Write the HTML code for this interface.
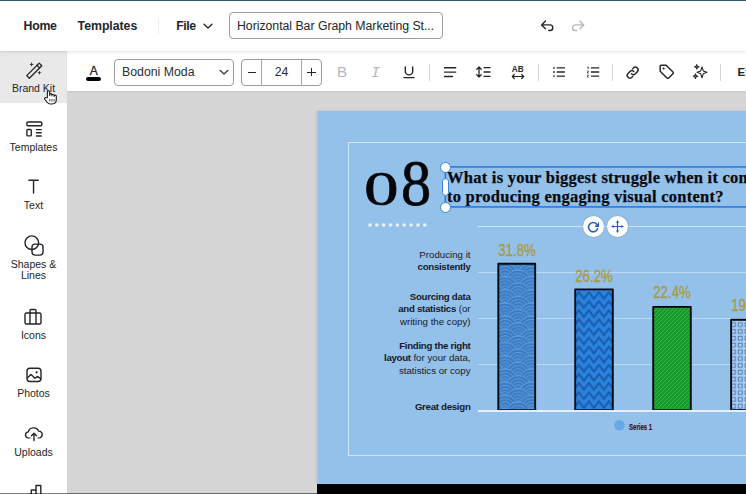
<!DOCTYPE html>
<html lang="en">
<head>
<meta charset="utf-8">
<title>Horizontal Bar Graph Marketing Statistics</title>
<style>
*{box-sizing:border-box;margin:0;padding:0}
html,body{width:746px;height:494px;overflow:hidden;background:#d6d6d6;font-family:"Liberation Sans",sans-serif;color:#1f2328}
.abs{position:absolute}
#app{position:relative;width:746px;height:494px;overflow:hidden;background:#d6d6d6}
#topline{left:0;top:0;width:746px;height:1.250px;background:#2d5d68;z-index:6}
#topbar{left:0;top:1px;width:746px;height:50px;background:#fff;box-shadow:0 1px 3px rgba(0,0,0,.12);z-index:5}
.nav{position:absolute;top:18px;font-weight:700;font-size:12.300px;line-height:15px;color:#22262b;white-space:nowrap}
#title{left:229px;top:11.100px;width:214px;height:27px;border:1px solid #9a9da1;border-radius:4px;font-size:12.300px;line-height:26px;padding-left:7px;letter-spacing:-.03px;color:#22262b;white-space:nowrap;overflow:hidden}
#sidebar{left:0;top:51px;width:67px;height:443px;background:#fff;z-index:3}
#brand{left:0;top:0;width:67px;height:52px;background:#e9e9e9}
.sb{position:absolute;left:0;width:67px;text-align:center;font-size:10.500px;line-height:12px;color:#22262b;white-space:nowrap}
.sb svg{display:block;margin:0 auto}
#toolbar{left:67px;top:51px;width:679px;height:39.600px;background:#fff;z-index:4;box-shadow:0 1px 2px rgba(0,0,0,.08)}
.box{position:absolute;border:1px solid #9a9da1;border-radius:4px;background:#fff}
.sep{position:absolute;top:12.500px;width:1px;height:17px;background:#d4d6d9}
.ico{position:absolute}
#slide{left:317px;top:111px;width:429px;height:373px;background:#94c1ea;box-shadow:-1px 0 3px rgba(0,0,0,.09)}
#black{left:317px;top:484px;width:429px;height:10px;background:#000}
#inner{left:31.400px;top:31.300px;width:420px;height:313.600px;border:1.800px solid rgba(214,233,250,.9)}
.lbl{position:absolute;right:275.500px;text-align:right;font-size:9.700px;line-height:12.100px;color:#16192b;white-space:nowrap}
.lbl b{font-weight:700;letter-spacing:-.3px}
.grid{position:absolute;left:161px;width:270px;height:1px;background:rgba(225,238,250,.55)}
.bar{position:absolute;border:2px solid #05070c}
.val{-webkit-text-stroke:.3px #a89b3e;position:absolute;font-size:16px;line-height:16px;color:#a89b3e;white-space:nowrap;transform:scaleX(.83);transform-origin:50% 50%;text-align:center;width:60px}
</style>
</head>
<body>
<div id="app">
  <div id="topline" class="abs"></div>
  <div id="topbar" class="abs">
    <div class="nav" style="left:23.500px;letter-spacing:-.25px">Home</div>
    <div class="nav" style="left:77.600px;letter-spacing:-.03px">Templates</div>
    <div class="abs" style="left:157.500px;top:18px;width:1px;height:15px;background:#ebecee"></div>
    <div class="nav" style="left:176.200px;letter-spacing:-.4px">File</div>
    <svg class="abs" style="left:202.400px;top:20px" width="12" height="10" viewBox="0 0 12 10"><path d="M2 3.200 L6 7 L10 3.200" fill="none" stroke="#22262b" stroke-width="1.300" stroke-linecap="round" stroke-linejoin="round"/></svg>
    <div id="title" class="abs">Horizontal Bar Graph Marketing St...</div>
    <svg class="abs" style="left:540px;top:18px" width="16" height="14" viewBox="0 0 16 14"><path d="M5.500 2 L1.600 5.900 L5.500 9.700 M1.600 5.900 H10 a2.800 2.800 0 0 1 0 5.600 H8.800" fill="none" stroke="#22262b" stroke-width="1.400" stroke-linecap="round" stroke-linejoin="round"/></svg>
    <svg class="abs" style="left:571px;top:18px" width="16" height="14" viewBox="0 0 16 14"><path d="M8.900 2 L12.800 5.900 L8.900 9.700 M12.800 5.900 H4.400 a2.800 2.800 0 0 0 0 5.600 H5.600" fill="none" stroke="#b6b9bd" stroke-width="1.400" stroke-linecap="round" stroke-linejoin="round"/></svg>
  </div>

  <div id="sidebar" class="abs">
    <div id="brand" class="abs"></div>
    <svg class="abs" style="left:24.500px;top:10.500px" width="19" height="18" viewBox="0 0 19 18"><g fill="none" stroke="#22262b" stroke-width="1.300" stroke-linejoin="round" stroke-linecap="round"><path d="M1.700 13.600 L14.200 1.100 L16.800 3.700 L4.300 16.200 Z"/><path d="M12 3.300 L14.600 5.900"/></g><g fill="#22262b"><path d="M6.600 .1 l.55 1.750 1.750.55 -1.750.55 -.55 1.750 -.55-1.750 -1.750-.55 1.750-.55z"/><path d="M14.400 8.500 l.55 1.750 1.750.55 -1.750.55 -.55 1.750 -.55-1.750 -1.750-.55 1.750-.55z"/></g></svg>
    <div class="sb" style="top:31.100px">Brand Kit</div>

    <svg class="abs" style="left:25px;top:69px" width="18" height="18" viewBox="0 0 18 18"><g fill="none" stroke="#22262b" stroke-width="1.400" stroke-linecap="round" stroke-linejoin="round"><rect x="1.900" y="2" width="14.900" height="3.800" rx="1"/><rect x="1.900" y="9.500" width="4.400" height="6.400" rx="1"/><path d="M11.400 9.600 H16.200 M11.400 12.800 H16.200 M11.400 16 H16.200"/></g></svg>
    <div class="sb" style="top:90.100px">Templates</div>

    <svg class="abs" style="left:25px;top:127px" width="18" height="18" viewBox="0 0 18 18"><path d="M3.900 2.300 H13.200 M8.550 2.300 V15" fill="none" stroke="#22262b" stroke-width="1.400" stroke-linecap="round"/></svg>
    <div class="sb" style="top:148.400px">Text</div>

    <svg class="abs" style="left:22.500px;top:183px" width="22" height="22" viewBox="0 0 22 22"><g fill="none" stroke="#22262b" stroke-width="1.400"><circle cx="8.800" cy="8.700" r="6.800"/><rect x="9" y="10.100" width="11" height="11" rx="3"/></g></svg>
    <div class="sb" style="top:207.800px;line-height:11.500px">Shapes &amp;<br>Lines</div>

    <svg class="abs" style="left:23.300px;top:255.500px" width="20" height="20" viewBox="0 0 20 20"><g fill="none" stroke="#22262b" stroke-width="1.400" stroke-linejoin="round"><rect x="2" y="6" width="16" height="11" rx="1.500"/><path d="M7 6 V3.500 a1 1 0 0 1 1-1 h4 a1 1 0 0 1 1 1 V6 M7 6 V17 M13 6 V17"/></g></svg>
    <div class="sb" style="top:278.100px">Icons</div>

    <svg class="abs" style="left:24.500px;top:314.700px" width="18" height="18" viewBox="0 0 18 18"><g fill="none" stroke="#22262b" stroke-width="1.400" stroke-linejoin="round" stroke-linecap="round"><rect x="2" y="2.300" width="14" height="13.200" rx="3"/><path d="M2.500 11.800 L6 8.500 L10 12.300 L12.500 10.400 L15.800 12.800"/></g><circle cx="11.600" cy="6.300" r="1.100" fill="#22262b"/></svg>
    <div class="sb" style="top:336.300px">Photos</div>

    <svg class="abs" style="left:23.700px;top:373.300px" width="20" height="18" viewBox="0 0 20 18"><g fill="none" stroke="#22262b" stroke-width="1.400" stroke-linejoin="round" stroke-linecap="round"><path transform="translate(0 1.820) scale(1 .87)" d="M6 14 H5 a3.500 3.500 0 0 1 -.6 -6.950 A5.200 5.200 0 0 1 14.600 6.100 A4 4 0 0 1 15 14 H14"/><path d="M10 16.500 V9.500 M7.500 11.700 L10 9.200 L12.500 11.700"/></g></svg>
    <div class="sb" style="top:395.100px">Uploads</div>

    <svg class="abs" style="left:23.500px;top:432.500px" width="20" height="14" viewBox="0 0 20 14"><path d="M2.800 14 V10.500 H7.300 V6 H12 V1.500 H16.800 V14" fill="none" stroke="#22262b" stroke-width="1.400" stroke-linejoin="round"/><path d="M7.300 10.500 V14 M12 6 V14" stroke="#22262b" stroke-width="1.400"/></svg>
  </div>

  <div id="toolbar" class="abs">
    <!-- text colour -->
    <div class="abs" style="left:18.700px;top:13.200px;width:16px;text-align:center;font-size:12px;line-height:14px;color:#22262b;-webkit-text-stroke:.3px #22262b">A</div>
    <div class="abs" style="left:19.400px;top:26.200px;width:15px;height:3.500px;border-radius:2px;background:#000"></div>
    <!-- font select -->
    <div class="box" style="left:47px;top:8px;width:120px;height:27px;font-size:12.300px;line-height:25px;padding-left:7px;color:#2a2e33">Bodoni Moda</div>
    <svg class="abs" style="left:151.300px;top:16.400px" width="12" height="10" viewBox="0 0 12 10"><path d="M2 3.200 L6 7 L10 3.200" fill="none" stroke="#33373c" stroke-width="1.200" stroke-linecap="round" stroke-linejoin="round"/></svg>
    <!-- size -->
    <div class="box" style="left:174px;top:8px;width:81px;height:27px"></div>
    <div class="abs" style="left:194px;top:8px;width:1px;height:27px;background:#a3a6aa"></div>
    <div class="abs" style="left:234px;top:8px;width:1px;height:27px;background:#a3a6aa"></div>
    <div class="abs" style="left:181.400px;top:20.600px;width:7.600px;height:1.300px;background:#22262b"></div>
    <div class="abs" style="left:195px;top:8px;width:39px;text-align:center;font-size:12.300px;line-height:27px;color:#2a2e33">24</div>
    <div class="abs" style="left:240.300px;top:20.600px;width:8.400px;height:1.300px;background:#22262b"></div>
    <div class="abs" style="left:243.850px;top:17.100px;width:1.300px;height:8.400px;background:#22262b"></div>
    <!-- B I U -->
    <div class="abs" style="left:269px;top:12px;font-size:15px;line-height:18px;color:#b4b8bd;width:12px;text-align:center">B</div>
    <div class="abs" style="left:301.500px;top:14.300px;font-family:'Liberation Mono',monospace;font-size:15px;line-height:18px;color:#b4b8bd;width:14px;text-align:center;font-style:italic">I</div>
    <svg class="ico" style="left:336.200px;top:15px" width="12" height="13" viewBox="0 0 12 13"><path d="M2.300 1 V5.200 a3.700 3.700 0 0 0 7.400 0 V1 M1 11.600 H11" fill="none" stroke="#22262b" stroke-width="1.400" stroke-linecap="round"/></svg>
    <div class="sep" style="left:362px"></div>
    <!-- align -->
    <svg class="ico" style="left:376px;top:15px" width="14" height="12" viewBox="0 0 14 12"><path d="M1.500 1.700 H12.700 M1.500 6.100 H12.700 M1.500 10.500 H9.500" fill="none" stroke="#22262b" stroke-width="1.400" stroke-linecap="round"/></svg>
    <!-- line height -->
    <svg class="ico" style="left:408px;top:14px" width="16" height="14" viewBox="0 0 16 14"><path d="M4 2 V12 M1.800 4.200 L4 2 L6.200 4.200 M1.800 9.800 L4 12 L6.200 9.800 M9 2.700 H15 M9 7 H15 M9 11.300 H15" fill="none" stroke="#22262b" stroke-width="1.300" stroke-linecap="round" stroke-linejoin="round"/></svg>
    <!-- letter spacing -->
    <div class="abs" style="left:441.750px;top:14px;width:18px;text-align:center;font-size:8.200px;font-weight:700;line-height:9px;color:#22262b;letter-spacing:.2px">AB</div>
    <svg class="ico" style="left:443.750px;top:21.500px" width="14" height="7" viewBox="0 0 14 7"><path d="M1.300 3.500 H12.700 M3.300 1.500 L1.300 3.500 L3.300 5.500 M10.700 1.500 L12.700 3.500 L10.700 5.500" fill="none" stroke="#22262b" stroke-width="1.200" stroke-linecap="round" stroke-linejoin="round"/></svg>
    <div class="sep" style="left:470.500px"></div>
    <!-- bullets -->
    <svg class="ico" style="left:485px;top:15px" width="14" height="12" viewBox="0 0 14 12"><path d="M5.200 1.900 H12.500 M5.200 6 H12.500 M5.200 10.100 H12.500" fill="none" stroke="#22262b" stroke-width="1.300" stroke-linecap="round"/><g fill="#22262b"><circle cx="2" cy="1.900" r=".9"/><circle cx="2" cy="6" r=".9"/><circle cx="2" cy="10.100" r=".9"/></g></svg>
    <!-- numbered -->
    <svg class="ico" style="left:518.500px;top:15px" width="14" height="12" viewBox="0 0 14 12"><path d="M5.400 1.900 H12.700 M5.400 6 H12.700 M5.400 10.100 H12.700" fill="none" stroke="#22262b" stroke-width="1.300" stroke-linecap="round"/><path d="M1.300 1.400 L2.200 .9 V3 M1.200 5 H2.500 L1.200 7 H2.600 M1.200 9.100 H2.500 L1.200 11.100 H2.600" fill="none" stroke="#22262b" stroke-width=".8"/></svg>
    <div class="sep" style="left:545px"></div>
    <!-- link -->
    <svg class="ico" style="left:558.200px;top:13.600px" width="15.300" height="15.300" viewBox="0 0 18 18"><g fill="none" stroke="#22262b" stroke-width="1.700" stroke-linecap="round" stroke-linejoin="round"><path d="M7.600 10.400 a3.200 3.200 0 0 0 4.500 0 l2.600-2.600 a3.200 3.200 0 0 0 -4.500-4.500 l-1.200 1.200"/><path d="M10.400 7.600 a3.200 3.200 0 0 0 -4.500 0 l-2.600 2.600 a3.200 3.200 0 0 0 4.500 4.500 l1.200-1.200"/></g></svg>
    <!-- tag -->
    <svg class="ico" style="left:590.600px;top:12.400px" width="17.400" height="17.400" viewBox="0 0 20 20"><path d="M2.500 3.500 a1 1 0 0 1 1-1 H9.400 L17.200 10.300 a1.400 1.400 0 0 1 0 2 L12.300 17.200 a1.400 1.400 0 0 1 -2 0 L2.500 9.400 Z" fill="none" stroke="#22262b" stroke-width="1.700" stroke-linejoin="round"/><circle cx="6.400" cy="6.400" r="1.200" fill="#22262b"/></svg>
    <!-- sparkle -->
    <svg class="ico" style="left:625px;top:12px" width="16" height="18" viewBox="0 0 16 18"><g fill="none" stroke="#22262b" stroke-width="1.100" stroke-linejoin="round"><path d="M10 3.800 l1.300 4.100 3.700 1.400 -3.700 1.400 -1.300 4.100 -1.300-4.100 -3.700-1.400 3.700-1.400z"/><path d="M4.800 1.600 l.6 1.600 1.700.6 -1.700.6 -.6 1.600 -.6-1.600 -1.700-.6 1.700-.6z"/><path d="M3.500 10.900 l.6 1.700 1.700.6 -1.700.6 -.6 1.700 -.6-1.700 -1.700-.6 1.700-.6z"/></g></svg>
    <div class="sep" style="left:652.700px"></div>
    <div class="abs" style="left:670.500px;top:13.200px;font-size:11.500px;font-weight:700;line-height:16px;color:#22262b;white-space:nowrap">Effects</div>
  </div>

  <div id="slide" class="abs">
    <div class="abs" style="left:0;top:0;width:1px;height:373px;background:rgba(211,211,211,.45)"></div>
    <div id="inner" class="abs"></div>
    <!-- big number -->
    <div class="abs" id="num0" style="-webkit-text-stroke:.8px #05060a;left:46.800px;top:33px;font-family:'Liberation Serif',serif;font-size:68px;line-height:70px;color:#05060a;transform:scale(1.02,.71);transform-origin:0 100%">0</div><div class="abs" id="num8" style="-webkit-text-stroke:.8px #05060a;left:83.700px;top:38.400px;font-family:'Liberation Serif',serif;font-size:68px;line-height:70px;color:#05060a;transform:scale(.885,.965);transform-origin:0 0">8</div>
    <!-- dots -->
    <svg class="abs" style="left:50px;top:111.400px" width="62" height="6" viewBox="0 0 62 6"><g fill="#eaf3fb"><circle cx="3.00" cy="3" r="1.800"/><circle cx="9.85" cy="3" r="1.800"/><circle cx="16.70" cy="3" r="1.800"/><circle cx="23.55" cy="3" r="1.800"/><circle cx="30.40" cy="3" r="1.800"/><circle cx="37.25" cy="3" r="1.800"/><circle cx="44.10" cy="3" r="1.800"/><circle cx="50.95" cy="3" r="1.800"/><circle cx="57.80" cy="3" r="1.800"/></g></svg>
    <!-- headline -->
    <div class="abs" id="head" style="left:130px;top:58px;font-family:'Liberation Serif',serif;font-weight:700;font-size:16.500px;line-height:18.900px;color:#0a0b10;white-space:nowrap;letter-spacing:.25px;-webkit-text-stroke:.25px #0a0b10">What is your biggest struggle when it comes<br>to producing engaging visual content?</div>
    <!-- selection -->
    <svg class="abs" style="left:120px;top:50px" width="309" height="52" viewBox="0 0 309 52"><rect x="8.400" y="5.900" width="320" height="40" fill="none" stroke="#2f7de1" stroke-width="1.700"/></svg>
    <!-- header line -->
    <div class="abs" style="left:161px;top:115px;width:270px;height:1px;background:rgba(225,238,250,.75)"></div>

    <!-- grid -->
    <div class="grid" style="top:161px"></div>
    <div class="grid" style="top:207px"></div>
    <div class="grid" style="top:253px"></div>
    
    <!-- labels -->
    <div class="lbl" style="top:137.800px">Producing it<br><b>consistently</b></div>
    <div class="lbl" style="top:180.400px"><b>Sourcing data</b><br><b>and statistics</b> (or<br>writing the copy)</div>
    <div class="lbl" style="top:229.400px"><b>Finding the right</b><br><b>layout</b> for your data,<br>statistics or copy</div>
    <div class="lbl" style="top:290.200px"><b>Great design</b></div>

    <!-- bars -->
    <svg class="abs" style="left:0;top:0" width="429" height="373" viewBox="0 0 429 373">
      <defs>
        <pattern id="p1" width="26.4" height="13.2" patternUnits="userSpaceOnUse" x="188" y="165.600">
          <rect width="26.4" height="13.2" fill="#3a7ac2"/>
          <circle cx="0.00" cy="-13.20" r="13.20" fill="#3a7ac2" stroke="#66a6e2" stroke-width=".85"/><circle cx="0.00" cy="-13.20" r="10.0" fill="none" stroke="#66a6e2" stroke-width=".85"/><circle cx="0.00" cy="-13.20" r="6.9" fill="none" stroke="#66a6e2" stroke-width=".85"/><circle cx="0.00" cy="-13.20" r="3.8" fill="none" stroke="#66a6e2" stroke-width=".85"/><circle cx="0.00" cy="-13.20" r="1.2" fill="none" stroke="#66a6e2" stroke-width=".85"/><circle cx="26.40" cy="-13.20" r="13.20" fill="#3a7ac2" stroke="#66a6e2" stroke-width=".85"/><circle cx="26.40" cy="-13.20" r="10.0" fill="none" stroke="#66a6e2" stroke-width=".85"/><circle cx="26.40" cy="-13.20" r="6.9" fill="none" stroke="#66a6e2" stroke-width=".85"/><circle cx="26.40" cy="-13.20" r="3.8" fill="none" stroke="#66a6e2" stroke-width=".85"/><circle cx="26.40" cy="-13.20" r="1.2" fill="none" stroke="#66a6e2" stroke-width=".85"/><circle cx="13.20" cy="-6.60" r="13.20" fill="#3a7ac2" stroke="#66a6e2" stroke-width=".85"/><circle cx="13.20" cy="-6.60" r="10.0" fill="none" stroke="#66a6e2" stroke-width=".85"/><circle cx="13.20" cy="-6.60" r="6.9" fill="none" stroke="#66a6e2" stroke-width=".85"/><circle cx="13.20" cy="-6.60" r="3.8" fill="none" stroke="#66a6e2" stroke-width=".85"/><circle cx="13.20" cy="-6.60" r="1.2" fill="none" stroke="#66a6e2" stroke-width=".85"/><circle cx="-13.20" cy="-6.60" r="13.20" fill="#3a7ac2" stroke="#66a6e2" stroke-width=".85"/><circle cx="-13.20" cy="-6.60" r="10.0" fill="none" stroke="#66a6e2" stroke-width=".85"/><circle cx="-13.20" cy="-6.60" r="6.9" fill="none" stroke="#66a6e2" stroke-width=".85"/><circle cx="-13.20" cy="-6.60" r="3.8" fill="none" stroke="#66a6e2" stroke-width=".85"/><circle cx="-13.20" cy="-6.60" r="1.2" fill="none" stroke="#66a6e2" stroke-width=".85"/><circle cx="39.60" cy="-6.60" r="13.20" fill="#3a7ac2" stroke="#66a6e2" stroke-width=".85"/><circle cx="39.60" cy="-6.60" r="10.0" fill="none" stroke="#66a6e2" stroke-width=".85"/><circle cx="39.60" cy="-6.60" r="6.9" fill="none" stroke="#66a6e2" stroke-width=".85"/><circle cx="39.60" cy="-6.60" r="3.8" fill="none" stroke="#66a6e2" stroke-width=".85"/><circle cx="39.60" cy="-6.60" r="1.2" fill="none" stroke="#66a6e2" stroke-width=".85"/><circle cx="0.00" cy="0.00" r="13.20" fill="#3a7ac2" stroke="#66a6e2" stroke-width=".85"/><circle cx="0.00" cy="0.00" r="10.0" fill="none" stroke="#66a6e2" stroke-width=".85"/><circle cx="0.00" cy="0.00" r="6.9" fill="none" stroke="#66a6e2" stroke-width=".85"/><circle cx="0.00" cy="0.00" r="3.8" fill="none" stroke="#66a6e2" stroke-width=".85"/><circle cx="0.00" cy="0.00" r="1.2" fill="none" stroke="#66a6e2" stroke-width=".85"/><circle cx="26.40" cy="0.00" r="13.20" fill="#3a7ac2" stroke="#66a6e2" stroke-width=".85"/><circle cx="26.40" cy="0.00" r="10.0" fill="none" stroke="#66a6e2" stroke-width=".85"/><circle cx="26.40" cy="0.00" r="6.9" fill="none" stroke="#66a6e2" stroke-width=".85"/><circle cx="26.40" cy="0.00" r="3.8" fill="none" stroke="#66a6e2" stroke-width=".85"/><circle cx="26.40" cy="0.00" r="1.2" fill="none" stroke="#66a6e2" stroke-width=".85"/><circle cx="13.20" cy="6.60" r="13.20" fill="#3a7ac2" stroke="#66a6e2" stroke-width=".85"/><circle cx="13.20" cy="6.60" r="10.0" fill="none" stroke="#66a6e2" stroke-width=".85"/><circle cx="13.20" cy="6.60" r="6.9" fill="none" stroke="#66a6e2" stroke-width=".85"/><circle cx="13.20" cy="6.60" r="3.8" fill="none" stroke="#66a6e2" stroke-width=".85"/><circle cx="13.20" cy="6.60" r="1.2" fill="none" stroke="#66a6e2" stroke-width=".85"/><circle cx="-13.20" cy="6.60" r="13.20" fill="#3a7ac2" stroke="#66a6e2" stroke-width=".85"/><circle cx="-13.20" cy="6.60" r="10.0" fill="none" stroke="#66a6e2" stroke-width=".85"/><circle cx="-13.20" cy="6.60" r="6.9" fill="none" stroke="#66a6e2" stroke-width=".85"/><circle cx="-13.20" cy="6.60" r="3.8" fill="none" stroke="#66a6e2" stroke-width=".85"/><circle cx="-13.20" cy="6.60" r="1.2" fill="none" stroke="#66a6e2" stroke-width=".85"/><circle cx="39.60" cy="6.60" r="13.20" fill="#3a7ac2" stroke="#66a6e2" stroke-width=".85"/><circle cx="39.60" cy="6.60" r="10.0" fill="none" stroke="#66a6e2" stroke-width=".85"/><circle cx="39.60" cy="6.60" r="6.9" fill="none" stroke="#66a6e2" stroke-width=".85"/><circle cx="39.60" cy="6.60" r="3.8" fill="none" stroke="#66a6e2" stroke-width=".85"/><circle cx="39.60" cy="6.60" r="1.2" fill="none" stroke="#66a6e2" stroke-width=".85"/><circle cx="0.00" cy="13.20" r="13.20" fill="#3a7ac2" stroke="#66a6e2" stroke-width=".85"/><circle cx="0.00" cy="13.20" r="10.0" fill="none" stroke="#66a6e2" stroke-width=".85"/><circle cx="0.00" cy="13.20" r="6.9" fill="none" stroke="#66a6e2" stroke-width=".85"/><circle cx="0.00" cy="13.20" r="3.8" fill="none" stroke="#66a6e2" stroke-width=".85"/><circle cx="0.00" cy="13.20" r="1.2" fill="none" stroke="#66a6e2" stroke-width=".85"/><circle cx="26.40" cy="13.20" r="13.20" fill="#3a7ac2" stroke="#66a6e2" stroke-width=".85"/><circle cx="26.40" cy="13.20" r="10.0" fill="none" stroke="#66a6e2" stroke-width=".85"/><circle cx="26.40" cy="13.20" r="6.9" fill="none" stroke="#66a6e2" stroke-width=".85"/><circle cx="26.40" cy="13.20" r="3.8" fill="none" stroke="#66a6e2" stroke-width=".85"/><circle cx="26.40" cy="13.20" r="1.2" fill="none" stroke="#66a6e2" stroke-width=".85"/><circle cx="13.20" cy="19.80" r="13.20" fill="#3a7ac2" stroke="#66a6e2" stroke-width=".85"/><circle cx="13.20" cy="19.80" r="10.0" fill="none" stroke="#66a6e2" stroke-width=".85"/><circle cx="13.20" cy="19.80" r="6.9" fill="none" stroke="#66a6e2" stroke-width=".85"/><circle cx="13.20" cy="19.80" r="3.8" fill="none" stroke="#66a6e2" stroke-width=".85"/><circle cx="13.20" cy="19.80" r="1.2" fill="none" stroke="#66a6e2" stroke-width=".85"/><circle cx="-13.20" cy="19.80" r="13.20" fill="#3a7ac2" stroke="#66a6e2" stroke-width=".85"/><circle cx="-13.20" cy="19.80" r="10.0" fill="none" stroke="#66a6e2" stroke-width=".85"/><circle cx="-13.20" cy="19.80" r="6.9" fill="none" stroke="#66a6e2" stroke-width=".85"/><circle cx="-13.20" cy="19.80" r="3.8" fill="none" stroke="#66a6e2" stroke-width=".85"/><circle cx="-13.20" cy="19.80" r="1.2" fill="none" stroke="#66a6e2" stroke-width=".85"/><circle cx="39.60" cy="19.80" r="13.20" fill="#3a7ac2" stroke="#66a6e2" stroke-width=".85"/><circle cx="39.60" cy="19.80" r="10.0" fill="none" stroke="#66a6e2" stroke-width=".85"/><circle cx="39.60" cy="19.80" r="6.9" fill="none" stroke="#66a6e2" stroke-width=".85"/><circle cx="39.60" cy="19.80" r="3.8" fill="none" stroke="#66a6e2" stroke-width=".85"/><circle cx="39.60" cy="19.80" r="1.2" fill="none" stroke="#66a6e2" stroke-width=".85"/><circle cx="0.00" cy="26.40" r="13.20" fill="#3a7ac2" stroke="#66a6e2" stroke-width=".85"/><circle cx="0.00" cy="26.40" r="10.0" fill="none" stroke="#66a6e2" stroke-width=".85"/><circle cx="0.00" cy="26.40" r="6.9" fill="none" stroke="#66a6e2" stroke-width=".85"/><circle cx="0.00" cy="26.40" r="3.8" fill="none" stroke="#66a6e2" stroke-width=".85"/><circle cx="0.00" cy="26.40" r="1.2" fill="none" stroke="#66a6e2" stroke-width=".85"/><circle cx="26.40" cy="26.40" r="13.20" fill="#3a7ac2" stroke="#66a6e2" stroke-width=".85"/><circle cx="26.40" cy="26.40" r="10.0" fill="none" stroke="#66a6e2" stroke-width=".85"/><circle cx="26.40" cy="26.40" r="6.9" fill="none" stroke="#66a6e2" stroke-width=".85"/><circle cx="26.40" cy="26.40" r="3.8" fill="none" stroke="#66a6e2" stroke-width=".85"/><circle cx="26.40" cy="26.40" r="1.2" fill="none" stroke="#66a6e2" stroke-width=".85"/>
        </pattern>
        <pattern id="p2" width="10" height="9.100" patternUnits="userSpaceOnUse" x="266.900" y="180">
          <rect width="10" height="9.100" fill="#2a83e0"/>
          <path d="M-1 9.160 L0 7.800 L5 1 L10 7.800 L11 9.160" fill="none" stroke="#1d5dab" stroke-width="2.100" stroke-linejoin="round"/>
        </pattern>
        <pattern id="p3" width="4" height="4" patternUnits="userSpaceOnUse" x="337" y="197">
          <rect width="4" height="4" fill="#15992a"/>
          <path d="M-1 5 L5 -1 M-1 1 L1 -1 M3 5 L5 3" stroke="#45bb55" stroke-width=".8"/>
        </pattern>
        <pattern id="p4" width="6.700" height="6.800" patternUnits="userSpaceOnUse" x="413.400" y="210.500">
          <rect width="6.700" height="6.800" fill="#a9cdf0"/>
          <rect x="1.300" y="1.300" width="3.700" height="3.700" fill="#b3d3f3" stroke="#4f7cb6" stroke-width="1"/>
        </pattern>
      </defs>
      <rect x="181.300" y="152.700" width="36.900" height="147" fill="url(#p1)"/>
      <rect x="258.200" y="178.400" width="37.600" height="121" fill="url(#p2)"/>
      <rect x="336.200" y="195.900" width="37.600" height="104" fill="url(#p3)"/>
      <rect x="414.100" y="208.700" width="37.600" height="91" fill="url(#p4)"/>
      <g fill="none" stroke="#05070c" stroke-width="1.850" stroke-linejoin="round">
        <path d="M181.300 299.500 V152.700 H218.200 V299.500"/>
        <path d="M258.200 299.500 V178.400 H295.800 V299.500"/>
        <path d="M336.200 299.500 V195.900 H373.800 V299.500"/>
        <path d="M414.100 299.500 V208.700 H452 V299.500"/>
      </g>
      <path d="M180.300 298.500 H219.200 M257.200 298.500 H296.800 M335.200 298.500 H374.800 M413.100 298.500 H429" stroke="#1a2a44" stroke-width="1"/>
      <circle cx="302.500" cy="314.300" r="5.300" fill="#67a8ea"/>
    </svg>
    <div class="abs" style="left:161px;top:299.200px;width:270px;height:1.500px;background:rgba(232,242,252,.95)"></div>

    <!-- values -->
    <div class="val" style="left:169.700px;top:131.600px">31.8%</div>
    <div class="val" style="left:247.100px;top:157.500px">26.2%</div>
    <div class="val" style="left:325.200px;top:174.400px">22.4%</div>
    <div class="val" style="left:402.800px;top:186.700px">19.6%</div>

    <!-- legend -->
    <div class="abs" style="left:311.600px;top:311.200px;font-size:8.500px;line-height:10px;font-weight:700;color:#451020;white-space:nowrap;transform:scaleX(.71);-webkit-text-stroke:.2px #451020;transform-origin:0 50%">Series 1</div>

    <!-- handles -->
    <div class="abs" style="left:123px;top:51px;width:11px;height:11px;border-radius:50%;background:#fff;border:1px solid #3a82dd"></div>
    <div class="abs" style="left:123px;top:90.800px;width:11px;height:11px;border-radius:50%;background:#fff;border:1px solid #3a82dd"></div>
    <div class="abs" style="left:125px;top:67.300px;width:7px;height:17.400px;border-radius:4px;background:#fff;border:1px solid #3a82dd"></div>
    <!-- rotate / move -->
    <div class="abs" style="left:266.100px;top:105.200px;width:20.600px;height:20.600px;border-radius:50%;background:#fff;box-shadow:0 0 1.500px rgba(0,0,0,.3)"></div>
    <svg class="abs" style="left:269.800px;top:110px" width="12.300" height="12.300" viewBox="0 0 24 24"><g fill="none" stroke="#2463c4" stroke-width="3.100" stroke-linecap="round" stroke-linejoin="round"><path d="M23 4 V10 H17"/><path d="M20.490 15 a9 9 0 1 1 -2.120 -9.360 L23 10"/></g></svg>
    <div class="abs" style="left:290.300px;top:105.200px;width:20.600px;height:20.600px;border-radius:50%;background:#fff;box-shadow:0 0 1.500px rgba(0,0,0,.3)"></div>
    <svg class="abs" style="left:294.100px;top:108.800px" width="13" height="13" viewBox="0 0 13 13"><path d="M6.500 1 V12 M1 6.500 H12" fill="none" stroke="#2463c4" stroke-width="1.200" stroke-linecap="round"/><path d="M4.700 2.600 L6.500 .6 L8.300 2.600 Z M4.700 10.400 L6.500 12.400 L8.300 10.400 Z M2.600 4.700 L.6 6.500 L2.600 8.300 Z M10.400 4.700 L12.400 6.500 L10.400 8.300 Z" fill="#2463c4"/></svg>
  </div>
  <div id="black" class="abs"></div>
  <div class="abs" style="left:0;top:493.200px;width:317px;height:.800px;background:rgba(0,0,0,.5);z-index:8"></div>

  <!-- cursor -->
  <svg class="abs" style="left:43.200px;top:89.800px;z-index:9" width="16.500" height="14.800" viewBox="0 0 17 18" preserveAspectRatio="none"><path d="M4.500 9.500 V2.300 a1.200 1.200 0 0 1 2.400 0 V7 V5.800 a1.150 1.150 0 0 1 2.300 0 V7.300 V6.500 a1.150 1.150 0 0 1 2.300 0 V8 V7.400 a1.100 1.100 0 0 1 2.200 0 V12 c0 3 -1.500 5 -4.500 5 H8 c-2 0 -3 -1 -4 -2.500 L1.600 10.800 a1.100 1.100 0 0 1 1.700 -1.300 Z" fill="#fff" stroke="#111" stroke-width="1.100" stroke-linejoin="round"/><path d="M7 11 V14 M9.200 11 V14 M11.400 11 V14" stroke="#111" stroke-width=".9"/></svg>
</div>
</body>
</html>
